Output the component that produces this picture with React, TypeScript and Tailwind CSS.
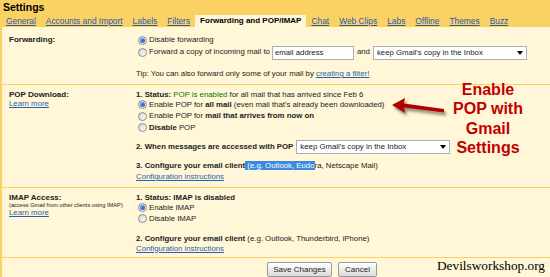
import React from 'react';

const link = 'text-[#2a5db0] underline';

const tabs = ['General', 'Accounts and Import', 'Labels', 'Filters', 'Forwarding and POP/IMAP', 'Chat', 'Web Clips', 'Labs', 'Offline', 'Themes', 'Buzz'];

const Radio: React.FC<{ checked?: boolean }> = ({ checked }) => (
  <span className="ml-[2px] mr-[2px] inline-flex h-[9px] w-[9px] shrink-0 items-center justify-center rounded-full border border-[#8c8c8c] bg-linear-to-br from-[#d4d4d4] to-white">
    {checked && <span className="h-[5px] w-[5px] rounded-full bg-linear-to-br from-[#6fa6f0] to-[#1b4fc0]" />}
  </span>
);

const FakeSelect: React.FC = () => (
  <div className="flex h-[14px] w-[154px] items-center justify-between border border-[#a9b0b8] bg-white pl-[3px] pr-[3px]">
    <span>keep Gmail's copy in the Inbox</span>
    <svg width="6" height="4" viewBox="0 0 6 4"><path d="M0 0h6L3 4z" fill="#000" /></svg>
  </div>
);

export default function App() {
  return (
    <div className="relative h-[277px] w-[550px] overflow-hidden bg-[#fad163] font-['Liberation_Sans',Arial,sans-serif] text-[#222]">
      {/* header */}
      <div className="h-[14px] pl-[3px] text-[10.5px] font-bold leading-[14px] text-black">Settings</div>
      <div className="flex h-[13px] pl-[1px] pt-[1px]">
        {tabs.map((t) =>
          t.startsWith('Forwarding') ? (
            <div key={t} className="bg-[#fff7d7] px-[5px] text-[8px] font-bold leading-[12px] text-black">{t}</div>
          ) : (
            <div key={t} className={`px-[5px] text-[8.4px] leading-[12px] ${link}`}>{t}</div>
          )
        )}
      </div>

      {/* content */}
      <div className="h-[250px] border-l-2 border-[#fad163] bg-[#fff7d7] text-[7.8px]">
        {/* Forwarding */}
        <div className="grid grid-cols-[134px_1fr] border-b border-[#fad163] pb-[4px] pt-[7px]">
          <div className="pl-[7px] text-[8px] font-bold leading-[12px]">Forwarding:</div>
          <div>
            <div className="flex h-[12px] items-center">
              <Radio checked />
              <span>Disable forwarding</span>
            </div>
            <div className="flex h-[12px] items-center">
              <Radio />
              <span>Forward a copy of incoming mail to</span>
              <input
                readOnly
                defaultValue="email address"
                className="ml-[2px] mt-[1px] h-[14px] w-[82px] border border-[#a9b0b8] bg-white px-[2px] text-[7.8px] outline-none"
              />
              <span className="mx-[3px]">and</span>
              <div className="mt-[1px]"><FakeSelect /></div>
            </div>
            <div className="mt-[10px] leading-[12px]">
              Tip: You can also forward only some of your mail by <span className={link}>creating a filter!</span>
            </div>
          </div>
        </div>

        {/* POP */}
        <div className="grid grid-cols-[134px_1fr] border-b border-[#fad163] pb-[4.5px] pt-[5px]">
          <div className="pl-[7px] leading-[9px]">
            <div className="text-[8px] font-bold">POP Download:</div>
            <div className={link}>Learn more</div>
          </div>
          <div>
            <div className="h-[9px] leading-[9px]">
              <b>1. Status:</b> <span className="text-[#007a00]">POP is enabled</span> for all mail that has arrived since Feb 6
            </div>
            <div className="flex h-[11.5px] items-center">
              <Radio checked />
              <span>Enable POP for <b>all mail</b> (even mail that's already been downloaded)</span>
            </div>
            <div className="flex h-[11.5px] items-center">
              <Radio />
              <span>Enable POP for <b>mail that arrives from now on</b></span>
            </div>
            <div className="flex h-[11.5px] items-center">
              <Radio />
              <span><b>Disable</b> POP</span>
            </div>
            <div className="mt-[6.5px] flex h-[14px] items-center gap-[3px]">
              <b>2. When messages are accessed with POP</b>
              <FakeSelect />
            </div>
            <div className="mt-[6px] h-[11px] leading-[11px]">
              <b>3. Configure your email client</b>
              <span className="bg-[#3b8ae0] text-white"> (e.g. Outlook, Eudo</span>ra, Netscape Mail)
            </div>
            <div className={`h-[11px] leading-[11px] ${link}`}>Configuration instructions</div>
          </div>
        </div>

        {/* IMAP */}
        <div className="grid grid-cols-[134px_1fr] border-b border-[#fad163] pb-[4px] pt-[5px]">
          <div className="pl-[7px]">
            <div className="text-[8px] font-bold leading-[9.5px]">IMAP Access:</div>
            <div className="text-[5.7px] leading-[6px]">(access Gmail from other clients using IMAP)</div>
            <div className={`leading-[10px] ${link}`}>Learn more</div>
          </div>
          <div>
            <div className="h-[9.5px] font-bold leading-[9.5px]">1. Status: IMAP is disabled</div>
            <div className="flex h-[11px] items-center">
              <Radio checked />
              <span>Enable IMAP</span>
            </div>
            <div className="flex h-[11px] items-center">
              <Radio />
              <span>Disable IMAP</span>
            </div>
            <div className="mt-[9.5px] h-[10px] leading-[10px]">
              <b>2. Configure your email client</b> (e.g. Outlook, Thunderbird, iPhone)
            </div>
            <div className={`h-[9px] leading-[9px] ${link}`}>Configuration instructions</div>
          </div>
        </div>

        {/* buttons */}
        <div className="flex gap-[6px] pl-[265px] pt-[4.5px]">
          <button className="h-[15px] w-[65px] rounded-[2px] border border-[#9a9a9a] bg-linear-to-b from-white to-[#dcdcdc] text-[8px] text-[#222]">Save Changes</button>
          <button className="h-[15px] w-[39px] rounded-[2px] border border-[#9a9a9a] bg-linear-to-b from-white to-[#dcdcdc] text-[8px] text-[#222]">Cancel</button>
        </div>
      </div>

      {/* annotation overlay */}
      <svg className="absolute left-[388px] top-[95px] drop-shadow-[2px_3px_1.5px_rgba(0,0,0,0.45)]" width="60" height="25" viewBox="0 0 60 25">
        <path d="M4 10 L17 3 L16 8.5 L56 14 L56 17.5 L16 12.5 L17 18 Z" fill="#b00000" />
      </svg>
      <div className="absolute left-[440px] top-[79.75px] w-[96px] text-center text-[16px] font-bold leading-[19.5px] text-[#c00000]">
        Enable<br />POP with<br />Gmail<br />Settings
      </div>
      <div className="absolute right-[5px] top-[258px] font-['Liberation_Serif',serif] text-[13.3px] leading-[16px] text-black">Devilsworkshop.org</div>
    </div>
  );
}
